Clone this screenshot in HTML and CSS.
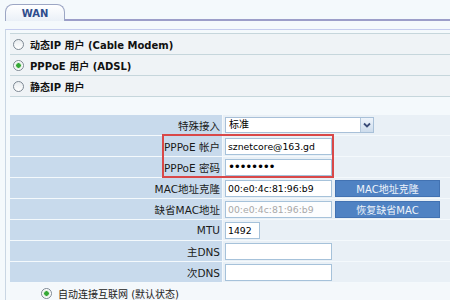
FILE: index.html
```html
<!DOCTYPE html>
<html lang="zh-CN">
<head>
    <meta charset="UTF-8">
    <title>WAN 设置</title>
    <link rel="stylesheet" href="styles.css">
</head>
<body>
    <div class="tabbar">
        <div class="tab">WAN</div>
        <div class="tab-rest"></div>
    </div>
    <div class="panel">
        <div class="modes">
            <label class="mode"><input type="radio" name="mode"> 动态IP 用户 (Cable Modem)</label>
            <label class="mode"><input type="radio" name="mode" checked> PPPoE 用户 (ADSL)</label>
            <label class="mode"><input type="radio" name="mode"> 静态IP 用户</label>
        </div>
        <div class="form">
            <div class="row">
                <div class="label">特殊接入</div>
                <div class="value">
                    <div class="select">
                        <span class="select-text">标准</span>
                        <span class="select-arrow">
                            <svg width="12" height="14" viewBox="0 0 12 14"><path d="M3 5.5 L6 8.5 L9 5.5" fill="none" stroke="#3b4c78" stroke-width="1.8"/></svg>
                        </span>
                    </div>
                </div>
            </div>
            <div class="row">
                <div class="label">PPPoE 帐户</div>
                <div class="value"><input class="field" type="text" value="sznetcore@163.gd"></div>
            </div>
            <div class="row">
                <div class="label">PPPoE 密码</div>
                <div class="value"><input class="field pass" type="password" value="12345678"></div>
            </div>
            <div class="row">
                <div class="label">MAC地址克隆</div>
                <div class="value"><input class="field" type="text" value="00:e0:4c:81:96:b9"><button class="btn">MAC地址克隆</button></div>
            </div>
            <div class="row">
                <div class="label">缺省MAC地址</div>
                <div class="value"><input class="field" type="text" value="00:e0:4c:81:96:b9" disabled><button class="btn">恢复缺省MAC</button></div>
            </div>
            <div class="row">
                <div class="label">MTU</div>
                <div class="value"><input class="field short" type="text" value="1492"></div>
            </div>
            <div class="row">
                <div class="label">主DNS</div>
                <div class="value"><input class="field" type="text" value=""></div>
            </div>
            <div class="row">
                <div class="label">次DNS</div>
                <div class="value"><input class="field" type="text" value=""></div>
            </div>
            <label class="row auto"><input type="radio" name="conn" checked> 自动连接互联网 (默认状态)</label>
            <div class="highlight"></div>
        </div>
    </div>
</body>
</html>
```

FILE: styles.css
```css
body {
    margin: 0;
    height: 300px;
    background-color: #f4f9fc;
    font-family: "DejaVu Sans", "Noto Sans CJK SC", sans-serif;
    font-size: 10px;
    color: #000;
    overflow: hidden;
}
.tabbar {
    display: flex;
    padding: 4px 0 0 5px;
}
.tab {
    width: 60px;
    height: 17px;
    box-sizing: border-box;
    border: 1px solid #9ca6c4;
    border-bottom: none;
    border-radius: 8px 8px 0 0;
    background: linear-gradient(#ffffff, #eaf0f7);
    color: #2f4c8c;
    font-weight: bold;
    text-align: center;
    line-height: 17px;
}
.tab-rest {
    flex: 1;
    height: 17px;
    box-sizing: border-box;
    border-bottom: 2px solid #9c9ec9;
}
.panel {
    margin: 8px 0 0 5px;
    padding: 3px 0 0 4px;
    border-top: 1px solid #c5ccee;
    border-left: 1px solid #c9d6e3;
    height: 270px;
    overflow: hidden;
}
.modes {
    border-bottom: 1px solid #c6d6dc;
}
.mode {
    display: flex;
    align-items: center;
    height: 20px;
    border-top: 1px solid #c6d6dc;
    background-color: #eff3f6;
    font-weight: bold;
    color: #111;
}
input[type="radio"] {
    appearance: none;
    width: 11px;
    height: 11px;
    margin: 0 6px 0 3px;
    border: 1px solid #7d8893;
    border-radius: 50%;
    background: linear-gradient(#e8ecef, #ffffff);
    box-sizing: border-box;
}
input[type="radio"]:checked {
    background: radial-gradient(circle, #34a834 0, #34a834 2px, #cfe6cf 2.5px, #ffffff 4px);
}
.form {
    position: relative;
    margin-top: 18px;
}
.row {
    display: flex;
    height: 21px;
    box-sizing: border-box;
    border-bottom: 1px solid #f4f9fc;
}
.label {
    width: 213px;
    box-sizing: border-box;
    padding-right: 2px;
    border-right: 1px solid #f4f9fc;
    background-color: #c8daec;
    display: flex;
    align-items: center;
    justify-content: flex-end;
    font-size: 10.5px;
    color: #1a1a1a;
}
.value {
    flex: 1;
    padding-left: 2px;
    background-color: #e9f0f6;
    display: flex;
    align-items: center;
}
.select {
    display: flex;
    width: 149px;
    height: 16px;
    box-sizing: border-box;
    border: 1px solid #a8c0d8;
    background: #fff;
}
.select-text {
    flex: 1;
    padding-left: 3px;
    line-height: 14px;
}
.select-arrow {
    width: 12px;
    height: 14px;
    border-left: 1px solid #b4c8dc;
    background: linear-gradient(#eef4fb, #cddcec);
}
.select-arrow svg {
    display: block;
}
.field {
    width: 107px;
    height: 17px;
    box-sizing: border-box;
    margin: 0;
    padding: 0 2px;
    border: 1px solid #a6c2da;
    background: #fff;
    font-family: "DejaVu Sans", sans-serif;
    font-size: 9.3px;
    color: #000;
}
.field.pass {
    font-size: 12px;
    letter-spacing: -1.3px;
}
.field:disabled {
    color: #a8a8a8;
    background: #fcfdfe;
}
.field.short {
    width: 35px;
}
.btn {
    width: 105px;
    height: 17px;
    margin: 0 0 0 3px;
    padding: 0;
    border: 1px solid #4272b2;
    background-color: #4f82c3;
    color: #eef3fa;
    font-family: "DejaVu Sans", "Noto Sans CJK SC", sans-serif;
    font-size: 10px;
}
.row.auto {
    align-items: center;
    padding-left: 28px;
    background-color: #f4f8fb;
    color: #222;
}
.highlight {
    position: absolute;
    left: 152px;
    top: 19px;
    width: 172px;
    height: 44px;
    box-sizing: border-box;
    border: 2px solid #d94848;
}
```
